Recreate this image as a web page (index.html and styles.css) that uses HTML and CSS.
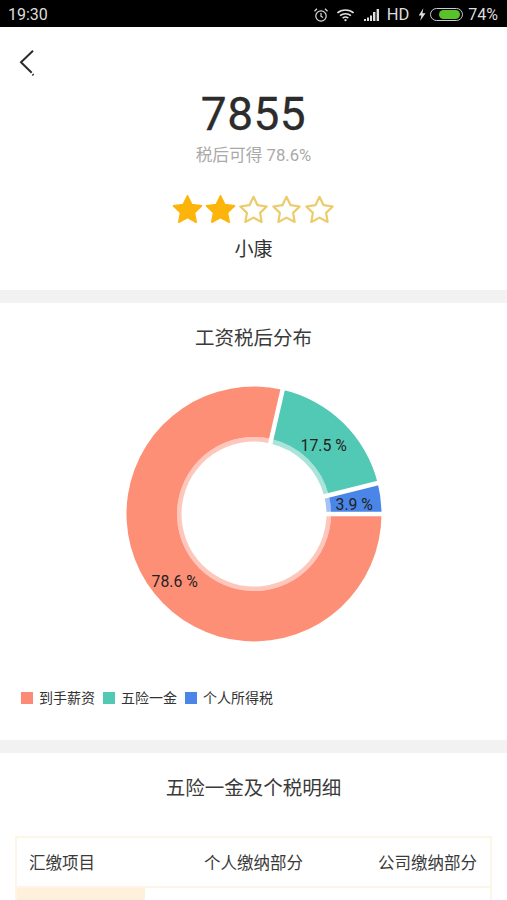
FILE: index.html
```html
<!DOCTYPE html>
<html lang="zh">
<head>
<meta charset="utf-8">
<title>工资税后分布</title>
<link rel="stylesheet" href="styles.css">
</head>
<body>
<div class="page">
  <div class="status">
    <span class="time">19:30</span>
    <div class="status-right">
      <svg class="ic-alarm" width="16" height="16" viewBox="0 0 16 16" fill="none" stroke="#ddd" stroke-width="1.2"><circle cx="8" cy="9" r="5.2"/><path d="M8 6v3.2l2 1.2M1.5 4.2 4 1.8M14.500 4.200 12 1.800"/></svg>
      <svg class="ic-wifi" width="19" height="14" viewBox="0 0 20 14" fill="none" stroke="#e4e4e4" stroke-width="1.700"><path d="M1.500 4.800C6 .8 14 .8 18.500 4.800M4.300 7.600C7.300 5 12.700 5 15.700 7.600M7 10.200c1.800-1.300 4.200-1.300 6 0"/><circle cx="10" cy="12.400" r="1.200" fill="#e4e4e4" stroke="none"/></svg>
      <svg class="ic-signal" width="18" height="12" viewBox="0 0 18 12" fill="#ddd"><rect x="0" y="10" width="2" height="2"/><rect x="3" y="8.500" width="2" height="3.500"/><rect x="6" y="6.500" width="2" height="5.500"/><rect x="9" y="3" width="2.400" height="9"/><rect x="12.600" y="0" width="2.400" height="12"/></svg>
      <span class="hd">HD</span>
      <svg class="ic-bolt" width="8" height="15" viewBox="0 0 9 14" fill="#ddd"><path d="M6 0 .8 8h3L2.500 14 8.500 5.500H5z"/></svg>
      <span class="batt"><span class="batt-fill"></span></span>
      <span class="pct">74%</span>
    </div>
  </div>

  <section class="top">
    <button class="back" aria-label="返回">
      <svg width="18" height="30" viewBox="0 0 18 30" fill="none" stroke="#2b2b2b" stroke-width="2"><path d="M15 2.700 3 14.300 13.700 24.700"/><path d="M14.500 26.300l1 1"/></svg>
    </button>
    <div class="amount">7855</div>
    <div class="after">税后可得 78.6%</div>
    <div class="stars">
      <svg class="star" viewBox="0 0 30 30"><path class="full" d="M15 2.500l3.900 8 8.800 1.200-6.400 6.100 1.600 8.700L15 22.300l-7.900 4.200 1.600-8.700-6.400-6.100 8.800-1.200z"/></svg>
      <svg class="star" viewBox="0 0 30 30"><path class="full" d="M15 2.500l3.900 8 8.800 1.200-6.400 6.100 1.600 8.700L15 22.300l-7.900 4.200 1.600-8.700-6.400-6.100 8.800-1.200z"/></svg>
      <svg class="star" viewBox="0 0 30 30"><path class="empty" d="M15 3.500l3.700 7.600 8.300 1.200-6 5.800 1.400 8.200-7.400-3.900-7.400 3.900L9 18.100l-6-5.800 8.300-1.200z"/></svg>
      <svg class="star" viewBox="0 0 30 30"><path class="empty" d="M15 3.500l3.700 7.600 8.300 1.200-6 5.800 1.400 8.200-7.400-3.900-7.400 3.900L9 18.100l-6-5.800 8.300-1.200z"/></svg>
      <svg class="star" viewBox="0 0 30 30"><path class="empty" d="M15 3.500l3.700 7.600 8.300 1.200-6 5.800 1.400 8.200-7.400-3.900-7.400 3.900L9 18.100l-6-5.800 8.300-1.200z"/></svg>
    </div>
    <div class="level">小康</div>
  </section>

  <section class="dist">
    <h2 class="title">工资税后分布</h2>
    <div class="chart">
      <svg class="donut" width="260" height="260" viewBox="-130 -130 260 260">
        <path fill="#fe8f77" d="M127.500 0A127.500 127.500 0 1 1 28.600 -124.300L17.300 -75A77 77 0 1 0 77 0Z"/>
        <path fill="#52c9b4" d="M28.600 -124.300A127.500 127.500 0 0 1 123.700 -30.900L74.700 -18.700A77 77 0 0 0 17.300 -75Z"/>
        <path fill="#4a86e8" d="M123.700 -30.900A127.500 127.500 0 0 1 127.500 0L77 0A77 77 0 0 0 74.700 -18.700Z"/>
        <path fill="#fe8f77" fill-opacity=".5" d="M77 0A77 77 0 1 1 17.300 -75L16.300 -70.600A72.500 72.500 0 1 0 72.500 0Z"/>
        <path fill="#52c9b4" fill-opacity=".5" d="M17.300 -75A77 77 0 0 1 74.700 -18.700L70.300 -17.600A72.500 72.500 0 0 0 16.300 -70.600Z"/>
        <path fill="#4a86e8" fill-opacity=".5" d="M74.700 -18.700A77 77 0 0 1 77 0L72.500 0A72.500 72.500 0 0 0 70.300 -17.600Z"/>
        <path stroke="#fff" stroke-width="4.500" fill="none" d="M65 0H130M15 -65 29.200 -126.700M63 -15.700 126.100 -31.500"/>
      </svg>
      <span class="pie-label l-a">78.6 %</span>
      <span class="pie-label l-b">17.5 %</span>
      <span class="pie-label l-c">3.9 %</span>
    </div>
    <div class="legend">
      <span class="leg"><i class="sw sw-a"></i>到手薪资</span>
      <span class="leg"><i class="sw sw-b"></i>五险一金</span>
      <span class="leg"><i class="sw sw-c"></i>个人所得税</span>
    </div>
  </section>

  <section class="detail">
    <h2 class="title">五险一金及个税明细</h2>
    <div class="table">
      <div class="thead">
        <span class="th">汇缴项目</span>
        <span class="th">个人缴纳部分</span>
        <span class="th">公司缴纳部分</span>
      </div>
      <div class="trow"><span class="cell-first"></span></div>
    </div>
  </section>
</div>
</body>
</html>
```
FILE: styles.css
```css
* { box-sizing: border-box; }
html, body { margin: 0; padding: 0; background: #fff; }
body { font-family: Roboto, "Noto Sans CJK SC", sans-serif; color: #333; }
.page { width: 507px; height: 900px; overflow: hidden; }

.status { height: 27px; margin-bottom: 1px; background: #000; color: #ddd; display: flex; align-items: center; justify-content: space-between; padding: 2px 9px 0 8px; font-size: 16px; }
.status-right { display: flex; align-items: center; }
.ic-alarm { margin-right: 7px; }
.ic-wifi { margin-right: 9px; }
.ic-signal { margin-right: 5px; }
.hd { margin-right: 9px; font-size: 16.500px; }
.ic-bolt { margin-right: 4px; }
.batt { width: 33px; height: 13px; border: 1px solid #ccc; border-radius: 7px; padding: 1px; display: flex; margin-right: 5px; }
.batt-fill { width: 21px; background: #59c22b; border-radius: 5px; margin-left: 7px; }

.top { height: 262px; display: flex; flex-direction: column; align-items: center; position: relative; }
.back { position: absolute; left: 18px; top: 20px; padding: 0; border: 0; background: none; line-height: 0; }
.amount { margin-top: 57px; font-size: 46px; line-height: 58px; color: #2c2c2c; letter-spacing: .5px; font-weight: 400; -webkit-text-stroke: .3px #2c2c2c; }
.after { margin-top: 2px; font-size: 16.700px; line-height: 22px; color: #a9a9a9; }
.stars { display: flex; margin-top: 26px; }
.star { width: 33px; height: 33px; display: block; }
.full { fill: #fdb40b; stroke: #fdb40b; stroke-width: 1.500; stroke-linejoin: round; }
.empty { fill: none; stroke: #eccb6a; stroke-width: 2; stroke-linejoin: round; }
.level { margin-top: 11px; font-size: 19px; line-height: 26px; color: #333; }

.dist { border-top: 13px solid #f2f2f2; height: 450px; position: relative; }
.title { margin: 0; font-weight: 400; font-size: 19.500px; line-height: 26px; color: #3a3a3a; text-align: center; padding-top: 23px; height: 49px; }
.chart { width: 260px; height: 260px; margin: 32px auto 0; position: relative; }
.donut { display: block; }
.pie-label { position: absolute; font-size: 15.800px; line-height: 18px; color: #222; white-space: nowrap; }
.l-a { left: 28px; top: 189px; }
.l-b { left: 177px; top: 53px; }
.l-c { left: 212px; top: 112px; }
.legend { display: flex; padding: 45px 0 0 21px; font-size: 14px; line-height: 18px; color: #333; }
.leg { display: flex; align-items: center; margin-right: 8px; }
.sw { width: 12px; height: 12px; margin-right: 6px; display: block; }
.sw-a { background: #fb8a76; }
.sw-b { background: #52c9b4; }
.sw-c { background: #4a86e8; }

.detail { border-top: 13px solid #f2f2f2; }
.detail .title { height: 83px; }
.table { margin: 0 15px; border: 2px solid #fdf5e8; border-bottom: 0; }
.thead { height: 50px; display: grid; grid-template-columns: 175px 174px auto; align-items: center; border-bottom: 2px solid #fdf5e8; font-size: 16.500px; color: #3a3a3a; padding-left: 12px; }
.trow { height: 60px; }
.cell-first { display: block; width: 128px; height: 60px; background: #fff0dc; }
```
